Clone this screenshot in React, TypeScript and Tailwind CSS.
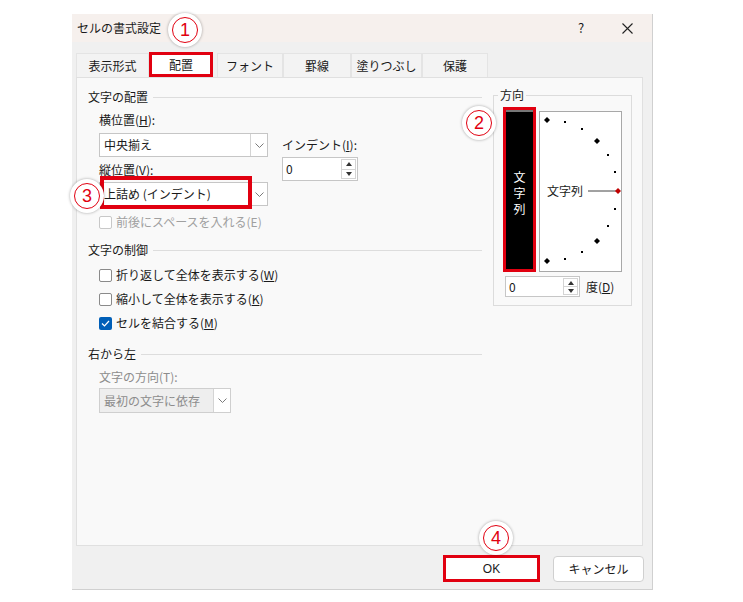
import React from "react";

const Chevron = () => (
  <svg width="9" height="5" viewBox="0 0 9 5">
    <polyline points="0.5,0.5 4.5,4.5 8.5,0.5" fill="none" stroke="#7a7a7a" strokeWidth="1" />
  </svg>
);

function Combo({ text, w, disabled }: { text: string; w: string; disabled?: boolean }) {
  return (
    <div
      className={`flex h-full ${w} border ${
        disabled ? "border-[#cfcfcf] bg-[#eeeeee] text-[#8c8c8c]" : "border-[#c6c6c6] bg-white"
      }`}
    >
      <div className="flex-1 flex items-center pl-[4px] whitespace-nowrap">{text}</div>
      <div className="w-[17px] bg-white border-l border-[#d4d4d4] flex items-center justify-center">
        <Chevron />
      </div>
    </div>
  );
}

function Spinner({ w }: { w: string }) {
  return (
    <div className={`flex h-full ${w} border border-[#c6c6c6] bg-white`}>
      <div className="flex-1 flex items-center pl-[3px]">0</div>
      <div className="w-[15px] my-[1px] mr-[1px] border border-[#d4d4d4] flex flex-col">
        <div className="flex-1 flex items-center justify-center border-b border-[#d4d4d4]">
          <svg width="6" height="4" viewBox="0 0 6 4">
            <polygon points="0,4 3,0 6,4" fill="#333" />
          </svg>
        </div>
        <div className="flex-1 flex items-center justify-center">
          <svg width="6" height="4" viewBox="0 0 6 4">
            <polygon points="0,0 6,0 3,4" fill="#333" />
          </svg>
        </div>
      </div>
    </div>
  );
}

function Section({ title }: { title: string }) {
  return (
    <div className="flex items-center h-[20px]">
      <span className="whitespace-nowrap">{title}</span>
      <div className="ml-[5px] flex-1 h-px bg-[#dddddd]" />
    </div>
  );
}

function Check({ children, checked, disabled }: { children: React.ReactNode; checked?: boolean; disabled?: boolean }) {
  return (
    <div className={`flex items-center h-[20px] gap-[4px] ${disabled ? "text-[#a0a0a0]" : ""}`}>
      {checked ? (
        <div className="w-[13px] h-[13px] rounded-[2px] bg-[#005fb8] flex items-center justify-center">
          <svg width="9" height="7" viewBox="0 0 9 7">
            <polyline points="1,3.5 3.5,6 8,1" fill="none" stroke="#fff" strokeWidth="1.2" />
          </svg>
        </div>
      ) : (
        <div
          className={`w-[13px] h-[13px] rounded-[2px] border bg-white ${
            disabled ? "border-[#c8c8c8]" : "border-[#8a8a8a]"
          }`}
        />
      )}
      <span className="whitespace-nowrap">{children}</span>
    </div>
  );
}

function Marker({ n, pos }: { n: string; pos: string }) {
  return (
    <div
      className={`absolute ${pos} w-[34px] h-[34px] rounded-full bg-white shadow-[0_0_3px_rgba(0,0,0,0.35)] flex items-center justify-center`}
    >
      <div className="w-[26px] h-[26px] rounded-full border-[1.5px] border-[#e10010] flex items-center justify-center text-[#e10010] text-[18px] leading-none font-['Liberation_Sans',sans-serif]">
        {n}
      </div>
    </div>
  );
}

const bigDots = [
  [7, 8],
  [57, 29],
  [57, 129],
  [7, 149],
];
const smallDots = [
  [25, 10],
  [42, 17],
  [68, 43],
  [75, 60],
  [75, 97],
  [68, 114],
  [42, 140],
  [25, 147],
];

function Dial() {
  return (
    <div className="ml-[3px] mt-[8px] w-[83px] h-[161px] border border-[#a8a8a8] bg-white">
      <svg width="81" height="159" viewBox="0 0 81 159">
        {bigDots.map(([x, y], i) => (
          <polygon key={i} points={`${x - 3},${y} ${x},${y - 3} ${x + 3},${y} ${x},${y + 3}`} fill="#000" />
        ))}
        {smallDots.map(([x, y], i) => (
          <rect key={i} x={x - 1} y={y - 1} width="2" height="2" fill="#000" />
        ))}
        <text
          x="7"
          y="83.5"
          fontSize="12"
          fill="#1a1a1a"
          fontFamily="'Noto Sans CJK JP', sans-serif"
        >
          文字列
        </text>
        <line x1="48" y1="79" x2="76" y2="79" stroke="#444" strokeWidth="1" />
        <polygon points="75,79 78,76 81,79 78,82" fill="#c00000" />
      </svg>
    </div>
  );
}

const tabs: [string, string][] = [
  ["表示形式", "w-[73px]"],
  ["配置", "w-[64px]"],
  ["フォント", "w-[66px] ml-[4px]"],
  ["罫線", "w-[68px]"],
  ["塗りつぶし", "w-[71px]"],
  ["保護", "w-[66px]"],
];

export default function App() {
  return (
    <div className="relative w-[743px] h-[602px] bg-white overflow-hidden pt-[14px] pl-[72px] text-[12px] text-[#1a1a1a] font-['Noto_Sans_CJK_JP','Noto_Sans',sans-serif]">
      <div className="w-[581px] h-[576px] flex flex-col bg-[#f0f0f0] border-r border-b border-[#d0d0d0]">
        {/* title bar */}
        <div className="h-[28px] bg-[#f6f0ed] flex items-center pl-[5px] pr-[2px]">
          <span>セルの書式設定</span>
          <div className="flex-1" />
          <div className="w-[46px] flex justify-center text-[13px]">?</div>
          <div className="w-[46px] flex justify-center">
            <svg width="11" height="11" viewBox="0 0 11 11">
              <path d="M0.5 0.5 L10.5 10.5 M10.5 0.5 L0.5 10.5" stroke="#222" strokeWidth="1.1" />
            </svg>
          </div>
        </div>

        {/* tabs */}
        <div className="mt-[10px] h-[25px] flex items-end pl-[4px]">
          {tabs.map(([t, w]) =>
            t === "配置" ? (
              <div
                key={t}
                className={`${w} h-[25px] border-[3px] border-[#e10010] bg-white flex items-center justify-center`}
              >
                {t}
              </div>
            ) : (
              <div
                key={t}
                className={`${w} h-[24px] bg-[#f3f3f3] border border-b-0 border-[#e4e4e4] flex items-center justify-center`}
              >
                {t}
              </div>
            )
          )}
        </div>

        {/* panel */}
        <div className="ml-[4px] w-[567px] h-[469px] border border-[#e0e0e0] bg-[#f9f9f9] flex pl-[11px] pt-[9px]">
          {/* left column */}
          <div className="w-[394px] flex flex-col">
            <Section title="文字の配置" />
            <div className="pl-[11px] flex flex-col">
              <div className="flex">
                <div className="w-[169px] flex flex-col">
                  <div className="mt-[3px] h-[20px] flex items-center">
                    横位置(<u>H</u>):
                  </div>
                  <div className="mt-[3px] h-[24px]">
                    <Combo text="中央揃え" w="w-[169px]" />
                  </div>
                  <div className="mt-[3px] h-[20px] flex items-center">
                    縦位置(<u>V</u>):
                  </div>
                  <div className="relative mt-[2px] h-[24px]">
                    <Combo text="上詰め (インデント)" w="w-[169px]" />
                    <div className="absolute left-[1px] top-[-6px] w-[152px] h-[33px] border-[4px] border-[#e10010]" />
                  </div>
                </div>
                <div className="ml-[14px] flex flex-col">
                  <div className="mt-[28px] h-[20px] flex items-center whitespace-nowrap">
                    インデント(<u>I</u>):
                  </div>
                  <div className="mt-[2px] h-[24px]">
                    <Spinner w="w-[76px]" />
                  </div>
                </div>
              </div>
              <div className="mt-[6px]">
                <Check disabled>前後にスペースを入れる(E)</Check>
              </div>
            </div>

            <div className="mt-[8px]">
              <Section title="文字の制御" />
            </div>
            <div className="pl-[11px] flex flex-col">
              <div className="mt-[5px]">
                <Check>
                  折り返して全体を表示する(<u>W</u>)
                </Check>
              </div>
              <div className="mt-[4px]">
                <Check>
                  縮小して全体を表示する(<u>K</u>)
                </Check>
              </div>
              <div className="mt-[4px]">
                <Check checked>
                  セルを結合する(<u>M</u>)
                </Check>
              </div>
            </div>

            <div className="mt-[11px]">
              <Section title="右から左" />
            </div>
            <div className="pl-[11px] flex flex-col">
              <div className="mt-[3px] h-[20px] flex items-center text-[#8c8c8c]">文字の方向(T):</div>
              <div className="mt-[1px] h-[25px]">
                <Combo text="最初の文字に依存" w="w-[132px]" disabled />
              </div>
            </div>
          </div>

          {/* right column */}
          <fieldset className="ml-[11px] w-[139px] h-[219px] border border-[#dcdcdc] px-[9px]">
            <legend className="ml-[-5px] px-[2px] leading-[16px]">方向</legend>
            <div className="flex items-start">
              <div className="mt-[4px] w-[33px] h-[165px] border-[3px] border-[#e10010]">
                <div className="w-full h-full bg-black border-t-[2px] border-[#777777] flex flex-col items-center justify-center text-white text-[12px] leading-[16px] pt-[4px]">
                  <span>文</span>
                  <span>字</span>
                  <span>列</span>
                </div>
              </div>
              <Dial />
            </div>
            <div className="mt-[4px] flex items-center">
              <div className="ml-[2px] h-[21px]">
                <Spinner w="w-[75px]" />
              </div>
              <span className="ml-[6px]">
                度(<u>D</u>)
              </span>
            </div>
          </fieldset>
        </div>

        {/* footer */}
        <div className="flex-1 flex justify-end items-start pt-[9px] pr-[8px]">
          <div className="w-[97px] h-[27px] border-[3px] border-[#e10010] bg-white flex items-center justify-center font-['Liberation_Sans',sans-serif]">
            OK
          </div>
          <div className="ml-[13px] mt-[1px] w-[91px] h-[26px] rounded-[4px] border border-[#d0d0d0] bg-white flex items-center justify-center">
            キャンセル
          </div>
        </div>
      </div>

      <Marker n="1" pos="left-[168px] top-[13px]" />
      <Marker n="2" pos="left-[462px] top-[106px]" />
      <Marker n="3" pos="left-[70px] top-[179px]" />
      <Marker n="4" pos="left-[479px] top-[521px]" />
    </div>
  );
}
